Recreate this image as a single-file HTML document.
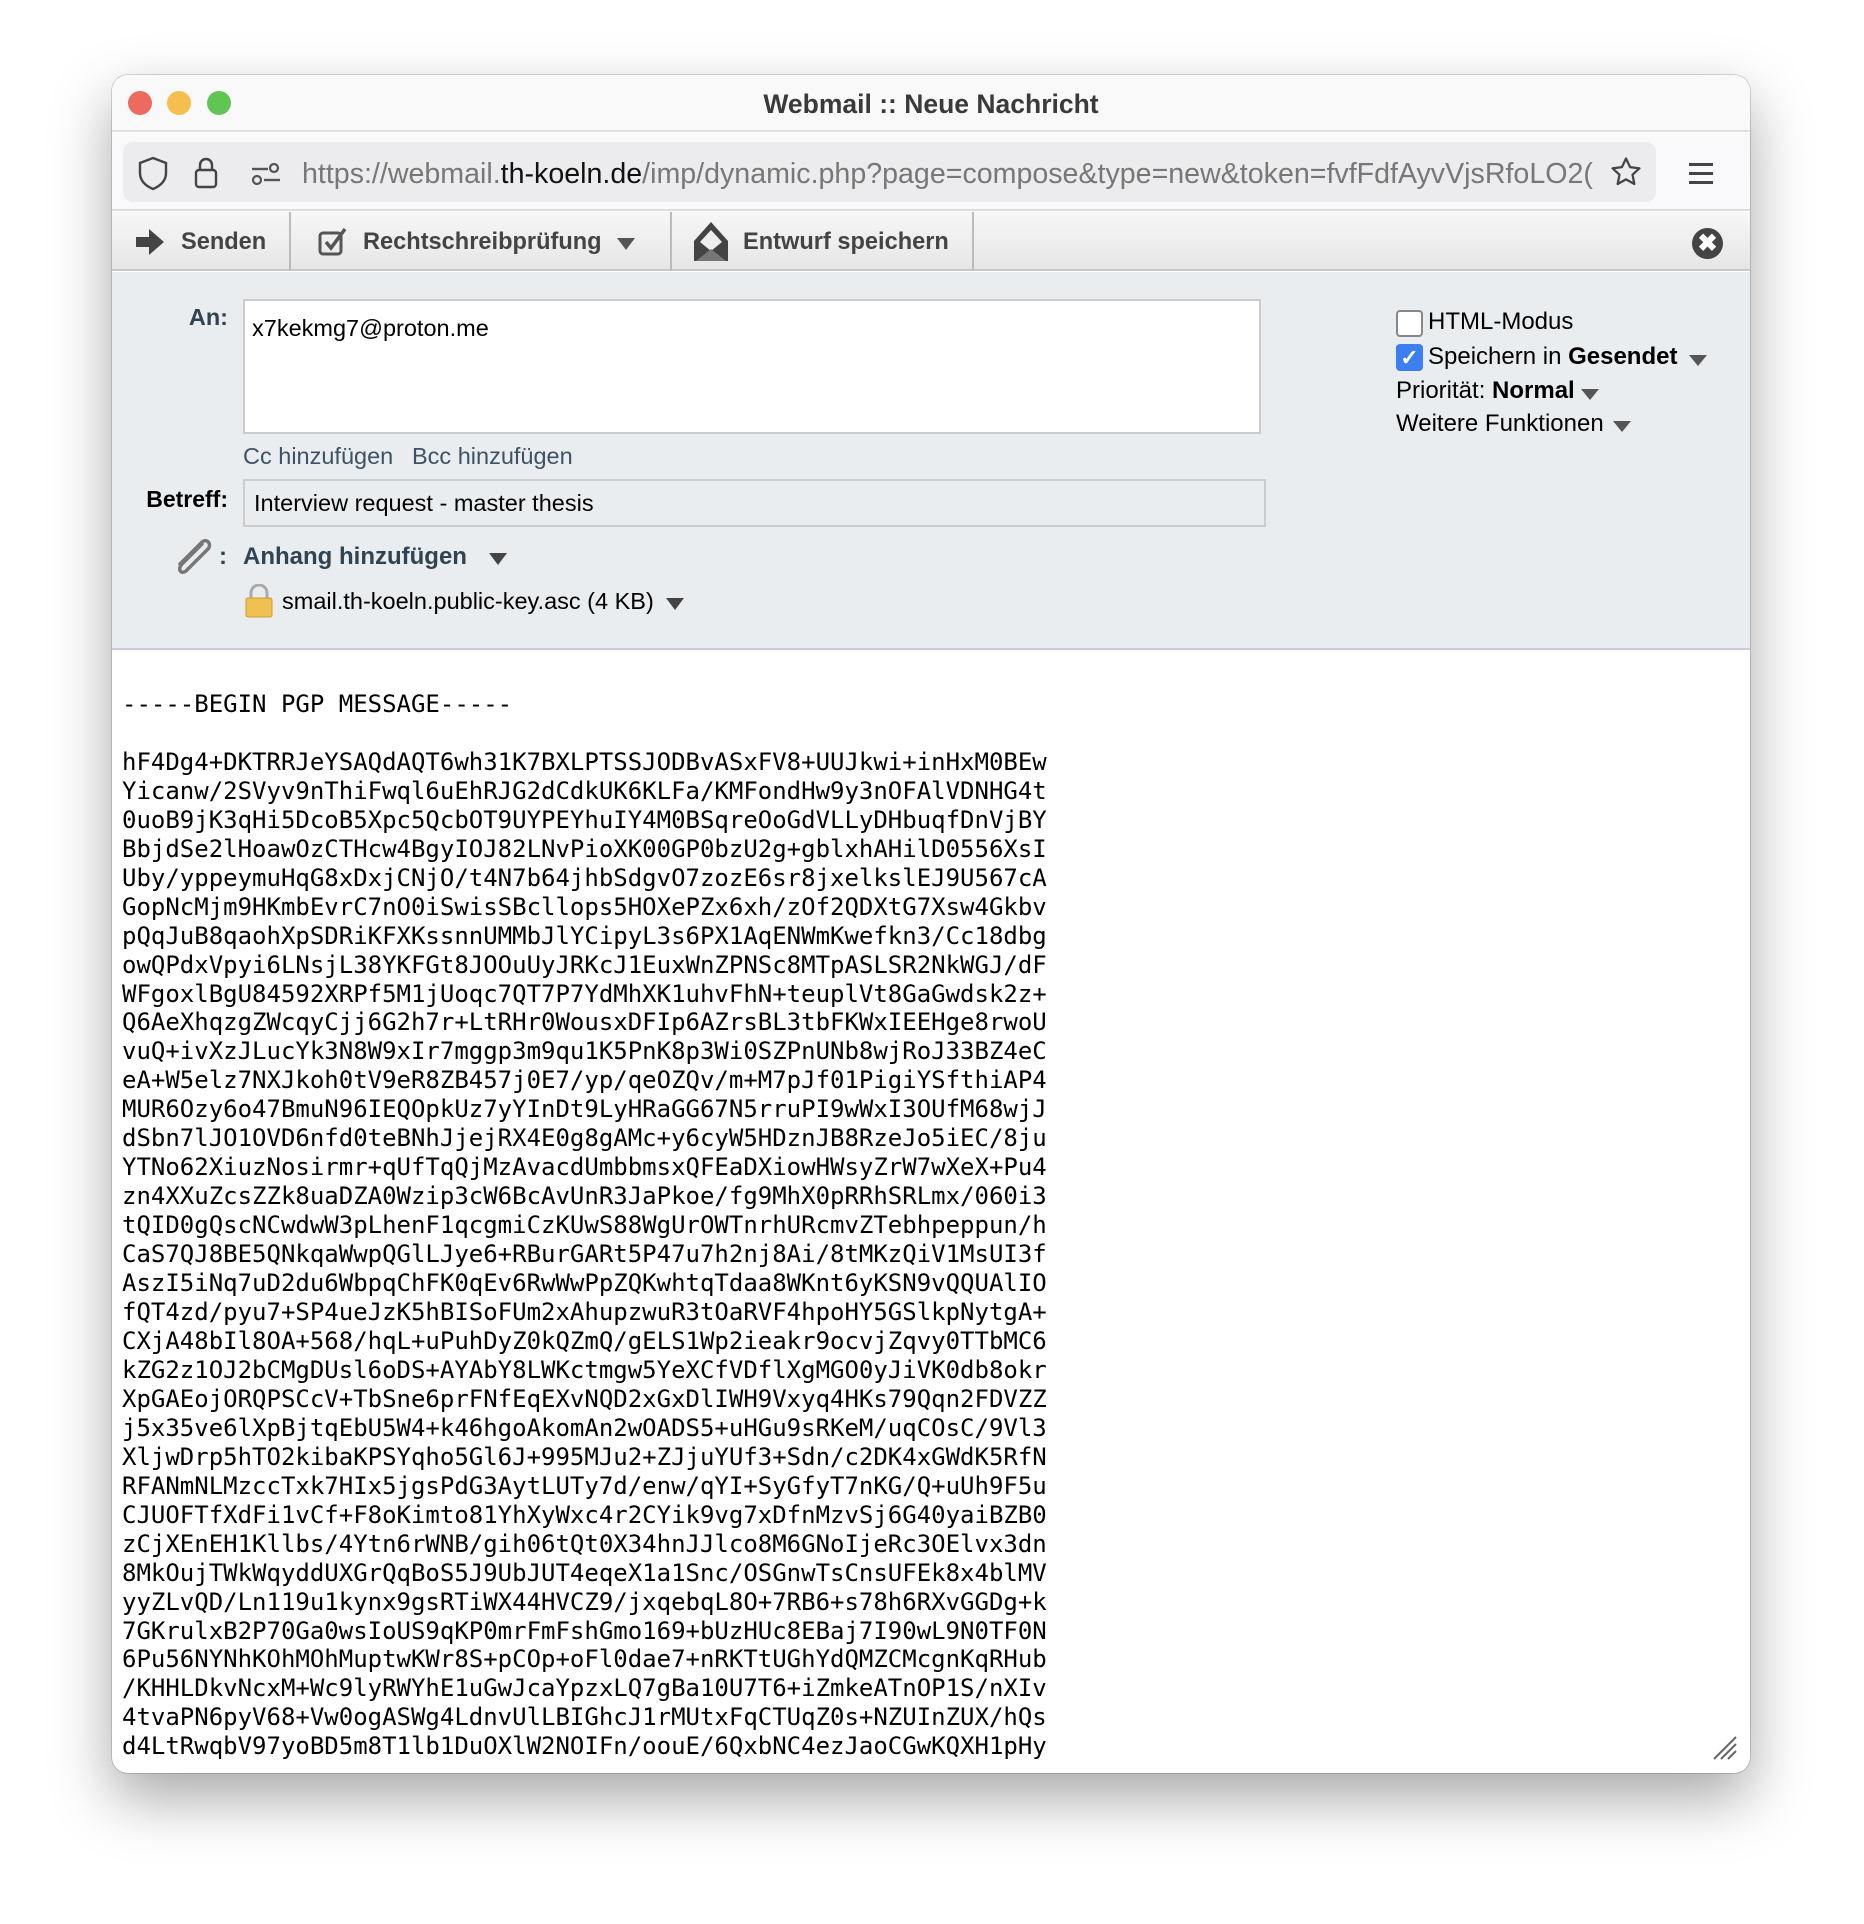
<!DOCTYPE html>
<html><head><meta charset="utf-8"><style>
*{margin:0;padding:0;box-sizing:border-box}
body{width:1864px;height:1924px;background:#fff;position:relative;overflow:hidden;font-family:"Liberation Sans",sans-serif}
.win{position:absolute;left:112px;top:75px;width:1638px;height:1698px;border-radius:16px;background:#fff;overflow:hidden;box-shadow:0 25px 60px rgba(0,0,0,.35),0 0 0 1px rgba(0,0,0,.15)}
.a{position:absolute}
.tl{position:absolute;width:24px;height:24px;border-radius:50%;top:91px}
.tb{font-weight:bold;color:#444;font-size:23.6px}
.mono{font-family:"DejaVu Sans Mono","Liberation Mono",monospace;font-size:24px;line-height:28.95px;white-space:pre;letter-spacing:0}
.rc{font-size:24px;color:#000}
</style></head><body>
<div class="win">
 <div class="a" style="left:0;top:0;width:1638px;height:57px;background:#f9f9f9;border-bottom:2px solid #e0e0e0"></div>
 <div class="a" style="left:0;width:1638px;top:10px;text-align:center;font-size:26.5px;font-weight:bold;color:#3a3a3a;line-height:38px">Webmail :: Neue Nachricht</div>
 <div class="a" style="left:0;top:58px;width:1638px;height:78px;background:#f9f9fb;border-bottom:2px solid #ddd"></div>
 <div class="a" style="left:11px;top:67px;width:1533px;height:60px;border-radius:10px;background:#ececee"></div>
 <svg class="a" style="left:24px;top:80px" width="120" height="36" viewBox="0 0 120 36">
  <path d="M17 3 L30 8 V18 C30 26 24 31 17 34 C10 31 4 26 4 18 V8 Z" fill="none" stroke="#444" stroke-width="2.4"/>
  <rect x="60" y="15" width="20" height="17" rx="3" fill="none" stroke="#444" stroke-width="2.4"/>
  <path d="M64 15 V10 A6 6 0 0 1 76 10 V15" fill="none" stroke="#444" stroke-width="2.4"/>
 </svg>
 <svg class="a" style="left:138px;top:86px" width="32" height="26" viewBox="0 0 32 26"><line x1="2" y1="8" x2="18" y2="8" stroke="#555" stroke-width="2.4"/><circle cx="24" cy="7" r="4" fill="none" stroke="#555" stroke-width="2.2"/><line x1="14" y1="19" x2="30" y2="19" stroke="#555" stroke-width="2.4"/><circle cx="7" cy="19" r="4" fill="none" stroke="#555" stroke-width="2.2"/></svg>
 <div class="a" style="left:190px;top:80px;width:1292px;height:38px;overflow:hidden;white-space:nowrap;font-size:28.6px;line-height:38px;color:#777">https://webmail.<span style="color:#111">th-koeln.de</span>/imp/dynamic.php?page=compose&amp;type=new&amp;token=fvfFdfAyvVjsRfoLO2(</div>
 <svg class="a" style="left:1497px;top:80px" width="34" height="34" viewBox="0 0 24 24"><path d="M12 2.5l2.9 6.1 6.6.8-4.9 4.5 1.3 6.6L12 17.2l-5.9 3.3 1.3-6.6-4.9-4.5 6.6-.8z" fill="none" stroke="#444" stroke-width="1.6" stroke-linejoin="round"/></svg>
 <div class="a" style="left:1577px;top:88px;width:24px;height:3px;background:#444;box-shadow:0 9px 0 #444,0 18px 0 #444"></div>
 <!-- toolbar -->
 <div class="a" style="left:0;top:137px;width:1638px;height:59px;background:linear-gradient(#f7f7f7,#e6e6e6);border-bottom:2px solid #c8c8c8"></div>
 <div class="a" style="left:177px;top:137px;width:2px;height:59px;background:#bbb"></div>
 <div class="a" style="left:558px;top:137px;width:2px;height:59px;background:#bbb"></div>
 <div class="a" style="left:860px;top:137px;width:2px;height:59px;background:#bbb"></div>
 <svg class="a" style="left:24px;top:154px" width="30" height="26" viewBox="0 0 30 26"><path d="M0 8h13V0l15 13-15 13v-8H0z" fill="#444"/></svg>
 <div class="a tb" style="left:69px;top:154px">Senden</div>
 <svg class="a" style="left:206px;top:152px" width="30" height="30" viewBox="0 0 30 30"><rect x="2" y="6" width="21" height="21" rx="3" fill="none" stroke="#555" stroke-width="3"/><path d="M8 15l5 6L27 2" fill="none" stroke="#555" stroke-width="3.5"/></svg>
 <div class="a tb" style="left:251px;top:154px">Rechtschreibprüfung</div>
 <div class="a" style="left:505px;top:163px;border-left:9px solid transparent;border-right:9px solid transparent;border-top:12px solid #555"></div>
 <svg class="a" style="left:581px;top:146px" width="36" height="42" viewBox="0 0 36 42"><path d="M18 1 L35 20 V40 H1 V20 Z" fill="#444"/><path d="M18 9 L29 21 L18 30 L7 21 Z" fill="#eee"/><path d="M3 40 L18 28 L33 40" fill="#777"/></svg>
 <div class="a tb" style="left:631px;top:154px">Entwurf speichern</div>
 <div class="a" style="left:1580px;top:153px;width:31px;height:31px;border-radius:50%;background:#444;color:#fff;font-weight:bold;font-size:24px;line-height:31px;text-align:center">✖</div>
 <!-- form -->
 <div class="a" style="left:0;top:197px;width:1638px;height:378px;background:#eaedef;border-bottom:2px solid #ccd"></div>
 <div class="a" style="left:70px;top:229px;width:46px;text-align:right;font-weight:bold;font-size:23.5px;color:#2f4352">An:</div>
 <div class="a" style="left:131px;top:224px;width:1018px;height:135px;background:#fff;border:2px solid #ccc"></div>
 <div class="a" style="left:140px;top:240px;font-size:23.5px;color:#000">x7kekmg7@proton.me</div>
 <div class="a" style="left:131px;top:368px;font-size:23.5px;color:#3d5264">Cc hinzufügen</div>
 <div class="a" style="left:300px;top:368px;font-size:23.5px;color:#3d5264">Bcc hinzufügen</div>
 <div class="a" style="left:0;top:411px;width:116px;text-align:right;font-weight:bold;font-size:23px;color:#000">Betreff:</div>
 <div class="a" style="left:131px;top:404px;width:1023px;height:48px;background:#eaedef;border:2px solid #ccc"></div>
 <div class="a" style="left:142px;top:415px;font-size:23.5px;color:#000">Interview request - master thesis</div>
 <svg class="a" style="left:60px;top:463px" width="42" height="40" viewBox="0 0 42 40"><path d="M30 6 L10 26 C5 31 9 37 14 33 L36 11 C40 6 35 0 30 4 L8 26" fill="none" stroke="#777" stroke-width="3.5" stroke-linecap="round"/></svg>
 <div class="a" style="left:107px;top:468px;font-weight:bold;font-size:24px;color:#2f4352">:</div>
 <div class="a" style="left:131px;top:468px;font-weight:bold;font-size:24px;color:#2f4352">Anhang hinzufügen</div>
 <div class="a" style="left:377px;top:478px;border-left:9px solid transparent;border-right:9px solid transparent;border-top:12px solid #444"></div>
 <svg class="a" style="left:132px;top:509px" width="30" height="34" viewBox="0 0 30 34"><path d="M7 14V9a8 8 0 0 1 16 0v5" fill="none" stroke="#aaa" stroke-width="3"/><rect x="2" y="14" width="26" height="19" rx="2" fill="#f0c050" stroke="#c9a030"/></svg>
 <div class="a" style="left:170px;top:513px;font-size:23.5px;color:#000">smail.th-koeln.public-key.asc (4 KB)</div>
 <div class="a" style="left:554px;top:523px;border-left:9px solid transparent;border-right:9px solid transparent;border-top:12px solid #444"></div>
 <div class="a" style="left:1284px;top:235px;width:27px;height:27px;border:2px solid #888;border-radius:4px;background:#fff"></div>
 <div class="a rc" style="left:1316px;top:233px">HTML-Modus</div>
 <div class="a" style="left:1284px;top:269px;width:27px;height:27px;border-radius:4px;background:#3b7ff0;color:#fff;font-size:22px;line-height:27px;text-align:center;font-weight:bold">✓</div>
 <div class="a rc" style="left:1316px;top:268px">Speichern in <b>Gesendet</b></div>
 <div class="a" style="left:1577px;top:280px;border-left:9px solid transparent;border-right:9px solid transparent;border-top:11px solid #555"></div>
 <div class="a rc" style="left:1284px;top:302px">Priorität: <b>Normal</b></div>
 <div class="a" style="left:1469px;top:314px;border-left:9px solid transparent;border-right:9px solid transparent;border-top:11px solid #555"></div>
 <div class="a rc" style="left:1284px;top:335px">Weitere Funktionen</div>
 <div class="a" style="left:1501px;top:346px;border-left:9px solid transparent;border-right:9px solid transparent;border-top:11px solid #555"></div>
 <!-- body -->
 <div class="a mono" style="left:10px;top:615px">-----BEGIN PGP MESSAGE-----

hF4Dg4+DKTRRJeYSAQdAQT6wh31K7BXLPTSSJODBvASxFV8+UUJkwi+inHxM0BEw
Yicanw/2SVyv9nThiFwql6uEhRJG2dCdkUK6KLFa/KMFondHw9y3nOFAlVDNHG4t
0uoB9jK3qHi5DcoB5Xpc5QcbOT9UYPEYhuIY4M0BSqreOoGdVLLyDHbuqfDnVjBY
BbjdSe2lHoawOzCTHcw4BgyIOJ82LNvPioXK00GP0bzU2g+gblxhAHilD0556XsI
Uby/yppeymuHqG8xDxjCNjO/t4N7b64jhbSdgvO7zozE6sr8jxelkslEJ9U567cA
GopNcMjm9HKmbEvrC7nO0iSwisSBcllops5HOXePZx6xh/zOf2QDXtG7Xsw4Gkbv
pQqJuB8qaohXpSDRiKFXKssnnUMMbJlYCipyL3s6PX1AqENWmKwefkn3/Cc18dbg
owQPdxVpyi6LNsjL38YKFGt8JOOuUyJRKcJ1EuxWnZPNSc8MTpASLSR2NkWGJ/dF
WFgoxlBgU84592XRPf5M1jUoqc7QT7P7YdMhXK1uhvFhN+teuplVt8GaGwdsk2z+
Q6AeXhqzgZWcqyCjj6G2h7r+LtRHr0WousxDFIp6AZrsBL3tbFKWxIEEHge8rwoU
vuQ+ivXzJLucYk3N8W9xIr7mggp3m9qu1K5PnK8p3Wi0SZPnUNb8wjRoJ33BZ4eC
eA+W5elz7NXJkoh0tV9eR8ZB457j0E7/yp/qeOZQv/m+M7pJf01PigiYSfthiAP4
MUR6Ozy6o47BmuN96IEQOpkUz7yYInDt9LyHRaGG67N5rruPI9wWxI3OUfM68wjJ
dSbn7lJO1OVD6nfd0teBNhJjejRX4E0g8gAMc+y6cyW5HDznJB8RzeJo5iEC/8ju
YTNo62XiuzNosirmr+qUfTqQjMzAvacdUmbbmsxQFEaDXiowHWsyZrW7wXeX+Pu4
zn4XXuZcsZZk8uaDZA0Wzip3cW6BcAvUnR3JaPkoe/fg9MhX0pRRhSRLmx/060i3
tQID0gQscNCwdwW3pLhenF1qcgmiCzKUwS88WgUrOWTnrhURcmvZTebhpeppun/h
CaS7QJ8BE5QNkqaWwpQGlLJye6+RBurGARt5P47u7h2nj8Ai/8tMKzQiV1MsUI3f
AszI5iNq7uD2du6WbpqChFK0qEv6RwWwPpZQKwhtqTdaa8WKnt6yKSN9vQQUAlIO
fQT4zd/pyu7+SP4ueJzK5hBISoFUm2xAhupzwuR3tOaRVF4hpoHY5GSlkpNytgA+
CXjA48bIl8OA+568/hqL+uPuhDyZ0kQZmQ/gELS1Wp2ieakr9ocvjZqvy0TTbMC6
kZG2z1OJ2bCMgDUsl6oDS+AYAbY8LWKctmgw5YeXCfVDflXgMGO0yJiVK0db8okr
XpGAEojORQPSCcV+TbSne6prFNfEqEXvNQD2xGxDlIWH9Vxyq4HKs79Qqn2FDVZZ
j5x35ve6lXpBjtqEbU5W4+k46hgoAkomAn2wOADS5+uHGu9sRKeM/uqCOsC/9Vl3
XljwDrp5hTO2kibaKPSYqho5Gl6J+995MJu2+ZJjuYUf3+Sdn/c2DK4xGWdK5RfN
RFANmNLMzccTxk7HIx5jgsPdG3AytLUTy7d/enw/qYI+SyGfyT7nKG/Q+uUh9F5u
CJUOFTfXdFi1vCf+F8oKimto81YhXyWxc4r2CYik9vg7xDfnMzvSj6G40yaiBZB0
zCjXEnEH1Kllbs/4Ytn6rWNB/gih06tQt0X34hnJJlco8M6GNoIjeRc3OElvx3dn
8MkOujTWkWqyddUXGrQqBoS5J9UbJUT4eqeX1a1Snc/OSGnwTsCnsUFEk8x4blMV
yyZLvQD/Ln119u1kynx9gsRTiWX44HVCZ9/jxqebqL8O+7RB6+s78h6RXvGGDg+k
7GKrulxB2P70Ga0wsIoUS9qKP0mrFmFshGmo169+bUzHUc8EBaj7I90wL9N0TF0N
6Pu56NYNhKOhMOhMuptwKWr8S+pCOp+oFl0dae7+nRKTtUGhYdQMZCMcgnKqRHub
/KHHLDkvNcxM+Wc9lyRWYhE1uGwJcaYpzxLQ7gBa10U7T6+iZmkeATnOP1S/nXIv
4tvaPN6pyV68+Vw0ogASWg4LdnvUlLBIGhcJ1rMUtxFqCTUqZ0s+NZUInZUX/hQs
d4LtRwqbV97yoBD5m8T1lb1DuOXlW2NOIFn/oouE/6QxbNC4ezJaoCGwKQXH1pHy</div>
 <svg class="a" style="left:1600px;top:1660px" width="26" height="26" viewBox="0 0 26 26"><path d="M2 24L24 2M9 24L24 9M16 24L24 16" stroke="#666" stroke-width="2"/></svg>
</div>
<div class="tl" style="left:128px;background:#ed6a5e"></div>
<div class="tl" style="left:167px;background:#f5bf4f"></div>
<div class="tl" style="left:207px;background:#61c554"></div>
</body></html>
